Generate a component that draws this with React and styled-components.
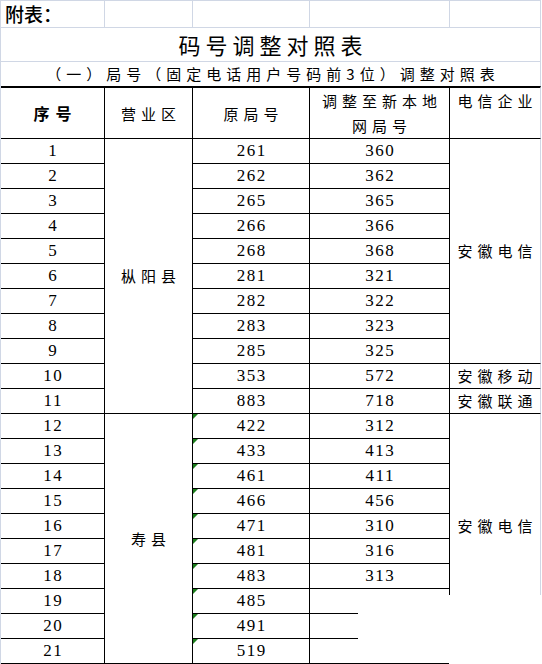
import React from 'react';
import styled, { createGlobalStyle, css } from 'styled-components';

const GRID = '#d0d7e5';
const INK = '#000';
const CN = '"Noto Sans CJK SC", "Liberation Sans", sans-serif';
const NUM = '"Liberation Serif", "Noto Sans CJK SC", serif';

const GlobalStyle = createGlobalStyle`
  html, body {
    margin: 0;
    padding: 0;
    background: #fff;
  }
  body {
    font-family: ${CN};
    color: ${INK};
  }
`;

const Sheet = styled.div`
  position: relative;
  width: 540px;
  border-left: 1px solid ${GRID};
  border-top: 1px solid ${GRID};
`;

const Table = styled.table`
  border-collapse: separate;
  border-spacing: 0;
  table-layout: fixed;
  width: 540px;
`;

const Row = styled.tr`
  height: ${p => p.$h}px;
`;

const spaced = (size, gap) => css`
  font-size: ${size}px;
  letter-spacing: ${gap}px;
  padding-left: ${gap}px;
`;

const TopCell = styled.td`
  padding: 0 0 0 4px;
  border-right: 1px solid ${GRID};
  border-bottom: 1px solid ${GRID};
  font-family: ${CN};
  font-size: 19px;
  font-weight: 500;
  line-height: 26px;
  white-space: nowrap;
`;

const TitleCell = styled.td`
  padding: 0;
  border-right: 1px solid ${GRID};
  border-bottom: 1px solid ${GRID};
  text-align: center;
  font-family: ${CN};
  ${spaced(22, 5)}
  line-height: 33px;
  white-space: nowrap;
`;

const SubtitleCell = styled.td`
  padding: 0;
  border-right: 1px solid ${GRID};
  text-align: center;
  font-family: ${CN};
  ${spaced(15, 5)}
  line-height: 24px;
  white-space: nowrap;
`;

const HeadCell = styled.th`
  padding: 0;
  border-top: 2px solid ${INK};
  border-right: 1px solid ${p => (p.$edge ? GRID : INK)};
  border-bottom: 1px solid ${INK};
  text-align: center;
  vertical-align: ${p => (p.$top ? 'top' : 'middle')};
  font-family: ${CN};
  font-weight: ${p => (p.$bold ? 700 : 400)};
  ${p => (p.$bold ? spaced(16, 6) : spaced(15, 5))}
  line-height: 25px;
`;

const DataCell = styled.td`
  position: relative;
  padding: 0;
  border-right: 1px solid ${p => (p.$edge ? GRID : INK)};
  border-bottom: ${p => (p.$last ? 2 : 1)}px solid ${INK};
  text-align: center;
  vertical-align: middle;
  line-height: 24px;
  white-space: nowrap;
  ${p => (p.$cn
    ? css`font-family: ${CN}; ${spaced(15, 5)}`
    : css`font-family: ${NUM}; ${spaced(17, 1.5)}`)}

  ${p => p.$flag && css`
    &::before {
      content: '';
      position: absolute;
      top: 0;
      left: 0;
      border-top: 5px solid #1b7d1b;
      border-right: 5px solid transparent;
    }
  `}
`;

// white cover over the lower right corner of the scan
const Patch = styled.div`
  position: absolute;
  left: 357px;
  top: 594px;
  width: 184px;
  height: 69px;
  background: #fff;
  clip-path: polygon(0 0, 100% 0, 100% 100%, 91px 100%, 91px 67px, 0 67px);
`;

const rows = [
  ['1', '261', '360'],
  ['2', '262', '362'],
  ['3', '265', '365'],
  ['4', '266', '366'],
  ['5', '268', '368'],
  ['6', '281', '321'],
  ['7', '282', '322'],
  ['8', '283', '323'],
  ['9', '285', '325'],
  ['10', '353', '572'],
  ['11', '883', '718'],
  ['12', '422', '312'],
  ['13', '433', '413'],
  ['14', '461', '411'],
  ['15', '466', '456'],
  ['16', '471', '310'],
  ['17', '481', '316'],
  ['18', '483', '313'],
  ['19', '485', ''],
  ['20', '491', ''],
  ['21', '519', ''],
];

// start row index -> [text, span]
const areas = { 0: ['枞阳县', 11], 11: ['寿县', 10] };
const carriers = {
  0: ['安徽电信', 9],
  9: ['安徽移动', 1],
  10: ['安徽联通', 1],
  11: ['安徽电信', 9],
  20: ['', 1],
};

const widths = [104, 88, 117, 140, 91];

const App = () => {
  const lastIdx = rows.length - 1;
  return (
    <>
      <GlobalStyle />
      <Sheet>
        <Table>
          <colgroup>
            {widths.map((w, i) => <col key={i} style={{ width: w }} />)}
          </colgroup>
          <tbody>
            <Row $h={27}>
              <TopCell>附表：</TopCell>
              <TopCell />
              <TopCell />
              <TopCell />
              <TopCell />
            </Row>
            <Row $h={34}>
              <TitleCell colSpan={5}>码号调整对照表</TitleCell>
            </Row>
            <Row $h={24}>
              <SubtitleCell colSpan={5}>（一）局号（固定电话用户号码前3位）调整对照表</SubtitleCell>
            </Row>
            <Row $h={52}>
              <HeadCell $bold>序号</HeadCell>
              <HeadCell>营业区</HeadCell>
              <HeadCell>原局号</HeadCell>
              <HeadCell $top>调整至新本地<br />网局号</HeadCell>
              <HeadCell $top $edge>电信企业</HeadCell>
            </Row>
            {rows.map(([no, oldCode, newCode], i) => {
              const last = i === lastIdx;
              const area = areas[i];
              const carrier = carriers[i];
              return (
                <Row key={no} $h={last ? 26 : 25}>
                  <DataCell $last={last}>{no}</DataCell>
                  {area && (
                    <DataCell $cn rowSpan={area[1]} $last={i + area[1] - 1 === lastIdx}>
                      {area[0]}
                    </DataCell>
                  )}
                  <DataCell $last={last} $flag={i >= 11}>{oldCode}</DataCell>
                  <DataCell $last={last}>{newCode}</DataCell>
                  {carrier && (
                    <DataCell $cn $edge rowSpan={carrier[1]} $last={i + carrier[1] - 1 === lastIdx}>
                      {carrier[0]}
                    </DataCell>
                  )}
                </Row>
              );
            })}
          </tbody>
        </Table>
        <Patch />
      </Sheet>
    </>
  );
};

export default App;
